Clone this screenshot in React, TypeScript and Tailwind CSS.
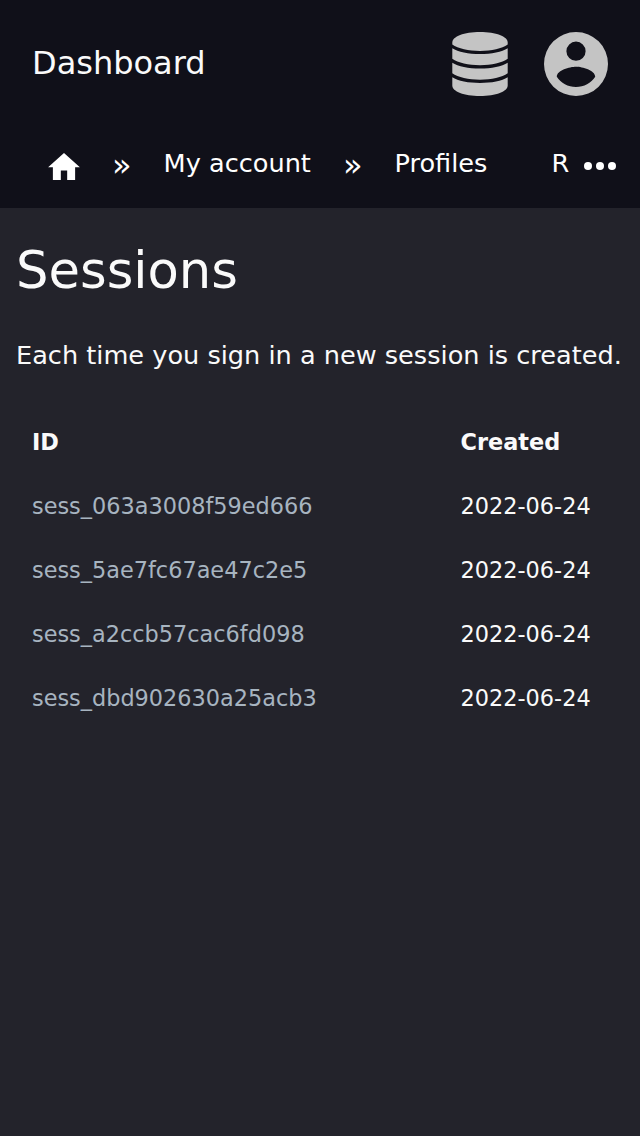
import React from 'react';

const sessions = [
  'sess_063a3008f59ed666',
  'sess_5ae7fc67ae47c2e5',
  'sess_a2ccb57cac6fd098',
  'sess_dbd902630a25acb3',
];

function DatabaseIcon() {
  return (
    <svg viewBox="0 0 56 64" className="h-16 w-14" fill="currentColor" aria-hidden="true">
      <path d="M.3 10.500C.3 4.500 12 0 28 0s27.700 4.500 27.700 10.500v2C50 16.600 39.500 18.900 28 18.900S6 16.600.3 12.500Z" />
      <path d="M.3 16.200C6 20 16.500 22 28 22s22-2 27.700-5.800v10.600C50 31 39.500 33.200 28 33.200S6 31 .3 26.800Z" />
      <path d="M.3 30.800C6 34.600 16.500 36.600 28 36.600s22-2 27.700-5.800v10.500C50 45.500 39.500 47.700 28 47.700S6 45.500.3 41.300Z" />
      <path d="M.3 45.300C6 49 16.500 51 28 51s22-2 27.700-5.700v8.200C55.700 59.500 44 64 28 64S.3 59.500.3 53.500Z" />
    </svg>
  );
}

function AccountIcon() {
  return (
    <svg viewBox="0 0 64 64" className="size-16" fill="currentColor" aria-hidden="true">
      <path fillRule="evenodd" d="M32 0a32 32 0 1 0 0 64 32 32 0 0 0 0-64Zm0 9.600a9.600 9.600 0 1 1 0 19.200 9.600 9.600 0 0 1 0-19.200Zm0 45.400c-8 0-15.100-4.100-19.200-10.300C12.900 38.300 25.600 34.800 32 34.800s19.100 3.500 19.200 9.900C47.100 50.900 40 55 32 55Z" />
    </svg>
  );
}

function HomeIcon() {
  return (
    <svg viewBox="2 3 20 17" className="mt-1 h-[27px] w-8 shrink-0" fill="currentColor" aria-hidden="true">
      <path d="M10 20v-6h4v6h5v-8h3L12 3 2 12h3v8z" />
    </svg>
  );
}

function MoreIcon() {
  return (
    <svg viewBox="0 0 32 8" className="mt-1 ml-auto h-2 w-8 shrink-0" fill="currentColor" aria-hidden="true">
      <circle cx="4" cy="4" r="4" />
      <circle cx="16" cy="4" r="4" />
      <circle cx="28" cy="4" r="4" />
    </svg>
  );
}

function Separator() {
  return <span className="mx-8 pt-0.5 text-[32px] leading-9">»</span>;
}

export default function App() {
  return (
    <div className="h-[1136px] w-[640px] overflow-hidden bg-[#23232b] font-['DejaVu_Sans',sans-serif] text-[#fafafa]">
      <header className="h-[208px] bg-[#101019]">
        <div className="flex h-32 items-center justify-between px-8">
          <div className="pb-0.5 text-[32px] leading-[48px]">Dashboard</div>
          <div className="flex items-center gap-9 text-[#c4c4c4]">
            <DatabaseIcon />
            <AccountIcon />
          </div>
        </div>
        <nav className="flex h-[72px] items-center pr-6 pl-12 text-[25.6px] leading-[38px] whitespace-nowrap text-white">
          <HomeIcon />
          <Separator />
          <a className="pb-0.5">My account</a>
          <Separator />
          <a className="pb-0.5">Profiles</a>
          <span className="ml-16 pb-0.5">R</span>
          <MoreIcon />
        </nav>
      </header>
      <main className="px-4 pt-6">
        <h1 className="text-[51.2px] leading-[77px]">Sessions</h1>
        <p className="mt-[27px] text-[25.6px] leading-[38px] whitespace-nowrap">Each time you sign in a new session is created.</p>
        <table className="mt-9 w-full table-fixed text-left text-[22.4px] leading-8">
          <thead>
            <tr className="h-16"><th className="w-[428.5px] px-4">ID</th><th className="px-4">Created</th></tr>
          </thead>
          <tbody>
            {sessions.map((id) => (
              <tr key={id} className="h-16"><td className="px-4 text-[#a7b4c0]">{id}</td><td className="px-4">2022-06-24</td></tr>
            ))}
          </tbody>
        </table>
      </main>
    </div>
  );
}
